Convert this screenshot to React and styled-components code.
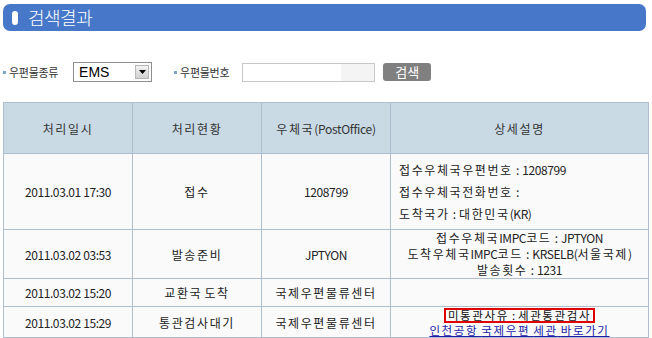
import React from 'react';
import styled, { createGlobalStyle } from 'styled-components';

const GlobalStyle = createGlobalStyle`
  body {
    margin: 0;
    background: #ffffff;
    font-family: 'Noto Sans CJK KR', 'Noto Sans', sans-serif;
    font-size: 12px;
    color: #222222;
  }
`;

const rows = [
  {
    date: '2011.03.01 17:30',
    status: '접수',
    office: '1208799',
    height: 76,
    align: 'left',
    details: ['접수우체국우편번호 : 1208799', '접수우체국전화번호 :', '도착국가 : 대한민국(KR)'],
    lineHeight: 22
  },
  {
    date: '2011.03.02 03:53',
    status: '발송준비',
    office: 'JPTYON',
    height: 48,
    align: 'center',
    details: ['접수우체국IMPC코드 : JPTYON', '도착우체국IMPC코드 : KRSELB(서울국제)', '발송횟수 : 1231'],
    lineHeight: 16
  },
  {
    date: '2011.03.02 15:20',
    status: '교환국 도착',
    office: '국제우편물류센터',
    height: 28,
    align: 'center',
    details: []
  },
  {
    date: '2011.03.02 15:29',
    status: '통관검사대기',
    office: '국제우편물류센터',
    height: 30,
    align: 'center',
    customs: true
  }
];

const spaced = (text) =>
  text.split(/([가-힣]+)/).map((part, i) =>
    /[가-힣]/.test(part) ? <Ko key={i}>{part}</Ko> : part
  );

const App = () => {
  return (
    <>
      <GlobalStyle />
      <Page>
        <TitleBar>
          <TitlePill />
          <Title>검색결과</Title>
        </TitleBar>

        <SearchRow>
          <Label>우편물종류</Label>
          <SelectBox>
            <SelectText>EMS</SelectText>
            <SelectArrow>
              <svg width="7" height="4" viewBox="0 0 7 4">
                <path d="M0 0 L7 0 L3.5 4 Z" fill="#000" />
              </svg>
            </SelectArrow>
          </SelectBox>
          <Label $gap={22}>우편물번호</Label>
          <NumberInput />
          <SearchButton>검색</SearchButton>
        </SearchRow>

        <Table>
          <colgroup>
            <col style={{ width: 129 }} />
            <col style={{ width: 129 }} />
            <col style={{ width: 129 }} />
            <col />
          </colgroup>
          <thead>
            <tr>
              <HeadCell>{spaced('처리일시')}</HeadCell>
              <HeadCell>{spaced('처리현황')}</HeadCell>
              <HeadCell>{spaced('우체국(PostOffice)')}</HeadCell>
              <HeadCell>{spaced('상세설명')}</HeadCell>
            </tr>
          </thead>
          <tbody>
            {rows.map((row) => (
              <tr key={row.date} style={{ height: row.height }}>
                <Cell>{row.date}</Cell>
                <Cell>{spaced(row.status)}</Cell>
                <Cell>{spaced(row.office)}</Cell>
                <DetailCell $align={row.align}>
                  {row.customs ? (
                    <>
                      <CustomsBox>{spaced('미통관사유 : 세관통관검사')}</CustomsBox>
                      <CustomsLink href="#">{spaced('인천공항 국제우편 세관 바로가기')}</CustomsLink>
                    </>
                  ) : (
                    row.details.map((line) => (
                      <DetailLine key={line} $lh={row.lineHeight}>
                        {spaced(line)}
                      </DetailLine>
                    ))
                  )}
                </DetailCell>
              </tr>
            ))}
          </tbody>
        </Table>
      </Page>
    </>
  );
};

export default App;

const Page = styled.div`
  width: 646px;
  padding: 4px 3px 0 3px;
`;

const TitleBar = styled.div`
  display: flex;
  align-items: center;
  width: 643px;
  height: 27px;
  box-sizing: border-box;
  padding-left: 9px;
  background-color: #4677c8;
  border-radius: 7px;
`;

const TitlePill = styled.span`
  width: 6px;
  height: 14px;
  background: #ffffff;
  border-radius: 3px;
`;

const Title = styled.span`
  margin-left: 10px;
  color: #ffffff;
  font-size: 18px;
  line-height: 27px;
  font-weight: 300;
  letter-spacing: -0.5px;
`;

const SearchRow = styled.div`
  display: flex;
  align-items: center;
  height: 20px;
  margin-top: 31px;
`;

const Label = styled.span`
  display: flex;
  align-items: center;
  margin-left: ${(p) => p.$gap || 0}px;
  font-size: 11px;
  letter-spacing: -0.3px;
  color: #333333;

  &::before {
    content: '';
    width: 3px;
    height: 3px;
    margin-right: 3px;
    background: #7fa3c9;
  }
`;

const SelectBox = styled.div`
  display: flex;
  align-items: center;
  justify-content: space-between;
  width: 79px;
  height: 20px;
  box-sizing: border-box;
  margin-left: 15px;
  padding: 0 2px 0 5px;
  border: 1px solid #8e8e8e;
  background: #ffffff;
`;

const SelectText = styled.span`
  font-family: 'Liberation Sans', Arial, sans-serif;
  font-size: 14px;
  color: #000000;
`;

const SelectArrow = styled.span`
  display: flex;
  align-items: center;
  justify-content: center;
  width: 14px;
  height: 14px;
  box-sizing: border-box;
  border: 1px solid #b5b5b5;
  background: linear-gradient(#f4f4f4, #cfcfcf);
`;

const NumberInput = styled.div`
  width: 133px;
  height: 19px;
  box-sizing: border-box;
  margin-left: 13px;
  border: 1px solid #c8c8c8;
  background: linear-gradient(90deg, #ffffff 75%, #f4f4f4 75%);
`;

const SearchButton = styled.button`
  width: 48px;
  height: 18px;
  margin-left: 8px;
  padding: 0;
  border: none;
  border-radius: 3px;
  background: #808080;
  color: #ffffff;
  font-family: 'Noto Sans CJK KR', sans-serif;
  font-size: 13px;
  line-height: 18px;
`;

const Ko = styled.span`
  letter-spacing: 1.6px;
`;

const Table = styled.table`
  width: 646px;
  margin-top: 20px;
  border-collapse: collapse;
  table-layout: fixed;
  border: 1px solid #aebfcf;
`;

const HeadCell = styled.th`
  height: 50px;
  padding: 0;
  border: 1px solid #aebfcf;
  background: #c9dae5;
  font-weight: 400;
  font-size: 12px;
  letter-spacing: -0.3px;
  color: #333333;
`;

const Cell = styled.td`
  padding: 0;
  border: 1px solid #aebfcf;
  background: #fafafa;
  text-align: center;
  font-size: 12px;
  letter-spacing: -0.4px;
  color: #222222;
`;

const DetailCell = styled(Cell)`
  text-align: ${(p) => p.$align};
  padding-left: ${(p) => (p.$align === 'left' ? 8 : 0)}px;
  line-height: 15px;
  word-spacing: 1px;
`;

const DetailLine = styled.div`
  line-height: ${(p) => p.$lh}px;
`;

const CustomsBox = styled.span`
  display: inline-block;
  padding: 0 2px;
  border: 2px solid #e00000;
  font-size: 11.5px;
  line-height: 11px;
  color: #111111;
`;

const CustomsLink = styled.a`
  display: block;
  margin-top: 1px;
  font-size: 11.5px;
  color: #1a1aa6;
  text-decoration: underline;
  line-height: 13px;
`;
